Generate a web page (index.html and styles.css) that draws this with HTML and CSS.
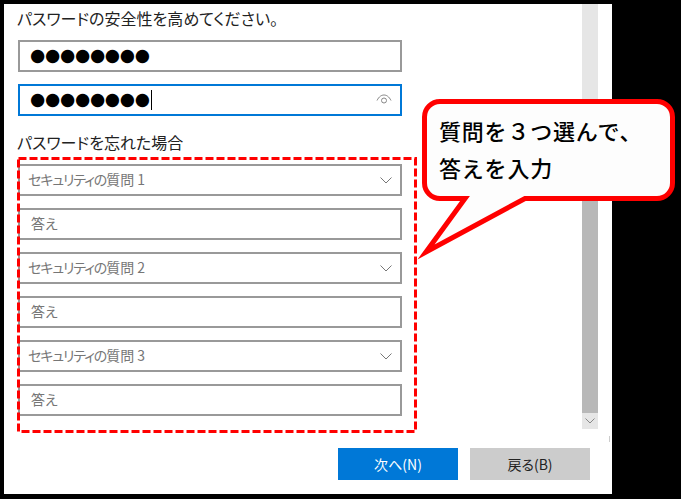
FILE: index.html
```html
<!DOCTYPE html>
<html lang="ja">
<head>
<meta charset="utf-8">
<title>パスワードの安全性を高めてください。</title>
<link rel="stylesheet" href="styles.css">
</head>
<body>
<div class="panel">
  <div class="main">
    <form class="form">
      <div class="heading">パスワードの安全性を高めてください。</div>
      <div class="stack">
        <div class="field"><span class="dots">●●●●●●●●</span></div>
        <div class="field field-focus">
          <span class="dots">●●●●●●●●</span><span class="caret"></span>
          <svg class="eye" width="16" height="10" viewBox="0 0 16 10" fill="none" stroke="#888" stroke-width="1"><path d="M1 6.500C3 2.500 5.500 1 8 1s5 1.500 7 5.500"/><circle cx="8" cy="6.500" r="2.500"/></svg>
        </div>
      </div>
      <div class="subheading">パスワードを忘れた場合</div>
      <div class="stack">
        <div class="field select"><span class="label"><span class="kana">セキュリティの</span>質問 1</span><svg class="chev" width="12" height="7" viewBox="0 0 12 7" fill="none" stroke="#777"><path d="M.5.500 6 6 11.500.5"/></svg></div>
        <div class="field answer"><span class="label">答え</span></div>
        <div class="field select"><span class="label"><span class="kana">セキュリティの</span>質問 2</span><svg class="chev" width="12" height="7" viewBox="0 0 12 7" fill="none" stroke="#777"><path d="M.5.500 6 6 11.500.5"/></svg></div>
        <div class="field answer"><span class="label">答え</span></div>
        <div class="field select"><span class="label"><span class="kana">セキュリティの</span>質問 3</span><svg class="chev" width="12" height="7" viewBox="0 0 12 7" fill="none" stroke="#777"><path d="M.5.500 6 6 11.500.5"/></svg></div>
        <div class="field answer"><span class="label">答え</span></div>
      </div>
    </form>
    <div class="scrollbar">
      <div class="track"></div>
      <div class="thumb"></div>
      <div class="arrow"><svg width="10" height="6" viewBox="0 0 10 6" fill="none" stroke="#888"><path d="M.5.500 5 5 9.500.5"/></svg></div>
    </div>
  </div>
  <div class="footer">
    <button class="btn btn-primary" type="button">次へ(N)</button>
    <button class="btn btn-secondary" type="button">戻る(B)</button>
  </div>
</div>
<div class="grip"></div>
<svg class="dashed" width="402" height="279" viewBox="0 0 402 279" fill="none"><rect x="1.500" y="1.500" width="397" height="273" stroke="#f00" stroke-width="3" stroke-dasharray="8 3"/></svg>
<svg class="bubble" width="265" height="170" viewBox="0 0 265 170"><path d="M26 4.500H243A15.500 15.500 0 0 1 258.500 20V86A15.500 15.500 0 0 1 243 101.500H111L12 155 51 101.500H26A15.500 15.500 0 0 1 10.500 86V20A15.500 15.500 0 0 1 26 4.500Z" fill="#fdfdfd" stroke="#f00" stroke-width="5" stroke-miterlimit="10"/></svg>
<div class="bubble-text">質問を３つ選んで、<br>答えを入力</div>
</body>
</html>
```
FILE: styles.css
```css
* { box-sizing: border-box; }
html, body { margin: 0; padding: 0; }
body {
  width: 681px;
  height: 499px;
  background: #000;
  padding: 4px 0 0 4px;
  overflow: hidden;
  position: relative;
  font-family: "Noto Sans CJK JP", "Noto Sans", sans-serif;
  font-feature-settings: "palt";
  color: #222;
}
.panel {
  width: 608px;
  height: 490px;
  background: #fff;
  display: flex;
  flex-direction: column;
}
.main {
  height: 425px;
  display: flex;
  justify-content: space-between;
  padding: 0 14px;
}
.form { width: 384px; }
.heading {
  font-size: 16px;
  line-height: 28px;
  margin-bottom: 8px;
  margin-left: -1px;
}
.subheading {
  font-size: 16px;
  line-height: 24px;
  margin: 14px 0 10px -1px;
}
.stack { display: flex; flex-direction: column; gap: 12px; }
.field {
  height: 32px;
  border: 2px solid #999;
  background: #fff;
  display: flex;
  align-items: center;
  font-size: 14px;
  color: #767676;
}
.field-focus { border-color: #0078d7; }
.dots {
  font-family: "DejaVu Sans", sans-serif;
  font-size: 17.500px;
  letter-spacing: -0.300px;
  line-height: 26px;
  margin-bottom: 2px;
  color: #000;
  margin-left: 10px;
}
.caret { width: 1px; height: 20px; background: #000; margin-left: 1px; }
.eye { margin-left: auto; margin-right: 8px; margin-bottom: 3px; }
.label { position: relative; top: -1px; }
.kana { letter-spacing: -1.100px; }
.select { justify-content: space-between; padding: 0 8px 0 8px; }
.answer { padding-left: 11px; }
.scrollbar {
  width: 16px;
  display: flex;
  flex-direction: column;
}
.track { height: 196px; background: #e6e6e6; }
.thumb { flex: 1; background: #b8b8b8; }
.arrow {
  height: 16px;
  background: #e6e6e6;
  display: flex;
  align-items: center;
  justify-content: center;
}
.footer {
  display: flex;
  justify-content: flex-end;
  gap: 12px;
  margin-top: 19px;
  padding-right: 22px;
}
.btn {
  width: 120px;
  height: 32px;
  border: 0;
  padding: 0;
  font: inherit;
  font-size: 14px;
}
.btn-primary { background: #0078d7; color: #fff; }
.btn-secondary { background: #ccc; color: #222; }
.grip {
  position: absolute;
  left: 609px;
  top: 436px;
  width: 1px;
  height: 6px;
  background: #ccc;
}
.dashed { position: absolute; left: 17px; top: 157px; }
.bubble { position: absolute; left: 414px; top: 97px; }
.bubble-text {
  position: absolute;
  left: 439px;
  top: 112px;
  font-size: 22px;
  line-height: 37px;
  letter-spacing: 0.800px;
  font-weight: 500;
  font-feature-settings: normal;
  color: #000;
  white-space: nowrap;
}
```
